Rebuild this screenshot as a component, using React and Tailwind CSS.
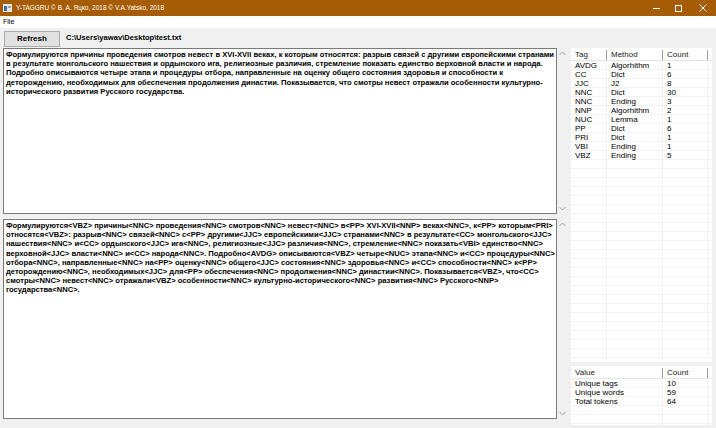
import React from 'react';

const topLines = [
  'Формулируются причины проведения смотров невест в XVI-XVII веках, к которым относятся: разрыв связей с другими европейскими странами',
  'в результате монгольского нашествия и ордынского ига, религиозные различия, стремление показать единство верховной власти и народа.',
  'Подробно описываются четыре этапа и процедуры отбора, направленные на оценку общего состояния здоровья и способности к',
  'деторождению, необходимых для обеспечения продолжения династии. Показывается, что смотры невест отражали особенности культурно-',
  'исторического развития Русского государства.',
];

const tagLines = [
  'Формулируются<VBZ> причины<NNC> проведения<NNC> смотров<NNC> невест<NNC> в<PP> XVI-XVII<NNP> веках<NNC>, к<PP> которым<PRI>',
  'относятся<VBZ>: разрыв<NNC> связей<NNC> с<PP> другими<JJC> европейскими<JJC> странами<NNC> в результате<CC> монгольского<JJC>',
  'нашествия<NNC> и<CC> ордынского<JJC> ига<NNC>, религиозные<JJC> различия<NNC>, стремление<NNC> показать<VBI> единство<NNC>',
  'верховной<JJC> власти<NNC> и<CC> народа<NNC>. Подробно<AVDG> описываются<VBZ> четыре<NUC> этапа<NNC> и<CC> процедуры<NNC>',
  'отбора<NNC>, направленные<NNC> на<PP> оценку<NNC> общего<JJC> состояния<NNC> здоровья<NNC> и<CC> способности<NNC> к<PP>',
  'деторождению<NNC>, необходимых<JJC> для<PP> обеспечения<NNC> продолжения<NNC> династии<NNC>. Показывается<VBZ>, что<CC>',
  'смотры<NNC> невест<NNC> отражали<VBZ> особенности<NNC> культурно-исторического<NNC> развития<NNC> Русского<NNP>',
  'государства<NNC>.',
];

const tags = [
  ['AVDG', 'Algorhithm', '1'],
  ['CC', 'Dict', '6'],
  ['JJC', 'J2', '8'],
  ['NNC', 'Dict', '30'],
  ['NNC', 'Ending', '3'],
  ['NNP', 'Algorhithm', '2'],
  ['NUC', 'Lemma', '1'],
  ['PP', 'Dict', '6'],
  ['PRI', 'Dict', '1'],
  ['VBI', 'Ending', '1'],
  ['VBZ', 'Ending', '5'],
];

const stats = [
  ['Unique tags', '10'],
  ['Unique words', '59'],
  ['Total tokens', '64'],
];

const ui = { fontFamily: '"Liberation Sans", "Noto Sans", Arial, sans-serif' };

function Scroll() {
  return (
    <div className="w-[11px] flex flex-col justify-between items-center py-[3px] text-[#a0a0a0]">
      <svg width="7" height="5" viewBox="0 0 7 5"><path d="M0.5 4 L3.5 1 L6.5 4" fill="none" stroke="currentColor" strokeWidth="1" /></svg>
      <svg width="7" height="5" viewBox="0 0 7 5"><path d="M0.5 1 L3.5 4 L6.5 1" fill="none" stroke="currentColor" strokeWidth="1" /></svg>
    </div>
  );
}

function TextBox({ lines, className }) {
  return (
    <div className={`flex min-h-0 ${className}`}>
      <div className="flex-1 bg-white border border-[#7a7a7a] overflow-hidden pl-[2px] pt-[1px]">
        {lines.map((l, i) => (
          <div key={i} className="whitespace-nowrap font-bold text-[7.6px] leading-[9.2px] text-black">{l}</div>
        ))}
      </div>
      <Scroll />
    </div>
  );
}

function Grid({ cols, rows, total, className }) {
  const blank = Array.from({ length: Math.max(0, total - rows.length) }, () => cols.map(() => ''));
  return (
    <div className={`bg-white overflow-hidden min-h-0 ${className}`}>
      <div className="flex h-[11px] mt-[2px] border-b border-[#e5e5e5]">
        {cols.map((c, i) => (
          <div key={i} className={`${c.w} border-r border-[#a0a0a0] pl-[4px] text-[8px] leading-[10px] text-[#222]`}>{c.label}</div>
        ))}
      </div>
      {[...rows, ...blank].map((r, ri) => (
        <div key={ri} className="flex h-[9px] border-b border-[#f3f3f3]">
          {r.map((v, ci) => (
            <div key={ci} className={`${cols[ci].w} border-r border-[#f0f0f0] pl-[4px] text-[8px] leading-[9px] text-black`}>{v}</div>
          ))}
        </div>
      ))}
    </div>
  );
}

export default function App() {
  return (
    <div className="w-[716px] h-[428px] bg-[#f0f0f0] flex flex-col overflow-hidden" style={ui}>
      <div className="h-[16px] bg-[#a65c04] flex items-center text-white shrink-0">
        <svg className="ml-[3px]" width="9" height="8" viewBox="0 0 9 8">
          <rect x="0" y="0" width="9" height="8" fill="#e8e8e8" />
          <rect x="1" y="2" width="3" height="5" fill="#3a6ea5" />
          <rect x="5" y="2" width="3" height="2" fill="#9aa9bb" />
        </svg>
        <span className="ml-[4px] text-[6.5px] leading-none">Y-TAGGRU © В. А. Яцко, 2018 © V.A.Yatsko, 2018</span>
        <div className="ml-auto flex items-center">
          <div className="w-[22px] flex justify-center">
            <svg width="7" height="7" viewBox="0 0 7 7"><path d="M0 3.5 H7" stroke="white" strokeWidth="1" /></svg>
          </div>
          <div className="w-[23px] flex justify-center">
            <svg width="7" height="7" viewBox="0 0 7 7"><rect x="0.5" y="0.5" width="6" height="6" fill="none" stroke="white" strokeWidth="1" /></svg>
          </div>
          <div className="w-[26px] flex justify-center">
            <svg width="8" height="8" viewBox="0 0 8 8"><path d="M0.5 0.5 L7.5 7.5 M7.5 0.5 L0.5 7.5" stroke="white" strokeWidth="1" /></svg>
          </div>
        </div>
      </div>
      <div className="h-[12px] bg-white flex items-center pl-[3px] text-[7px] text-black shrink-0">File</div>
      <div className="h-[20px] flex items-center shrink-0">
        <button className="ml-[4px] mt-[1px] w-[56px] h-[16px] bg-[#e1e1e1] border border-[#adadad] text-[8px] font-bold text-black leading-none" style={ui}>Refresh</button>
        <span className="ml-[6px] text-[7.6px] font-bold text-black">C:\Users\yawav\Desktop\test.txt</span>
      </div>
      <div className="flex-1 min-h-0 flex">
        <div className="w-[568px] min-h-0 pl-[3px] flex flex-col gap-[5px] pb-[9px]">
          <TextBox lines={topLines} className="h-[166px] shrink-0" />
          <TextBox lines={tagLines} className="flex-1" />
        </div>
        <div className="ml-[3px] w-[141px] min-h-0 flex flex-col gap-[4px] pb-[3px]">
          <Grid
            className="h-[314px] shrink-0"
            cols={[{ label: 'Tag', w: 'w-[36px]' }, { label: 'Method', w: 'w-[56px]' }, { label: 'Count', w: 'w-[45px]' }]}
            rows={tags}
            total={33}
          />
          <Grid
            className="flex-1"
            cols={[{ label: 'Value', w: 'w-[92px]' }, { label: 'Count', w: 'w-[45px]' }]}
            rows={stats}
            total={6}
          />
        </div>
      </div>
    </div>
  );
}
